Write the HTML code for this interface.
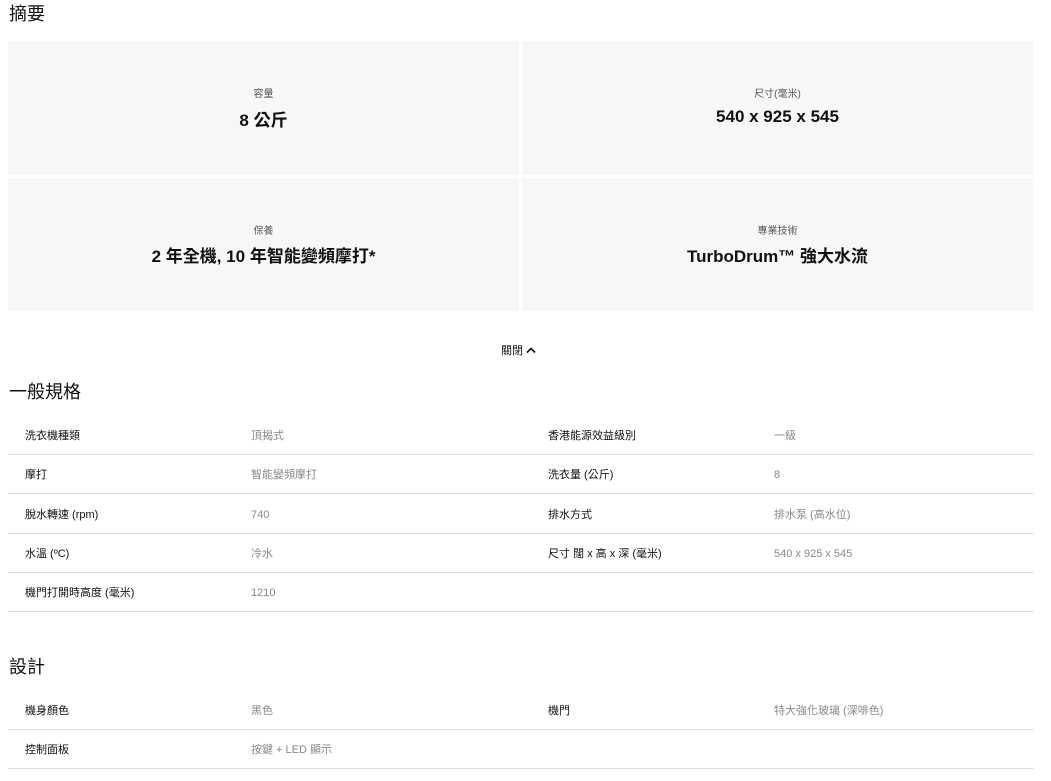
<!DOCTYPE html>
<html><head><meta charset="utf-8"><style>
body{margin:0;background:#fff;font-family:"Liberation Sans","Noto Sans CJK TC",sans-serif;color:#111;width:1051px;height:781px;overflow:hidden;position:relative}
.a{position:absolute}
h2{position:absolute;margin:0;font-size:18px;font-weight:normal;left:9px;line-height:24px}
.card{position:absolute;background:#f7f7f7;text-align:center}
.card .l{position:absolute;left:0;right:0;font-size:10px;color:#555}
.card .v{position:absolute;left:0;right:0;font-size:17px;font-weight:bold;color:#111}
.row{position:absolute;left:8px;width:1026px;height:38px;border-bottom:1px solid #ddd;font-size:11px}
.row span{position:absolute;top:13px;line-height:14px}
.k{color:#111}.g{color:#888}
</style></head><body>
<h2 style="top:2px">摘要</h2>
<div class="card" style="left:8px;top:41px;width:511px;height:134px"><div class="l" style="top:44px">容量</div><div class="v" style="top:65px">8 公斤</div></div>
<div class="card" style="left:522px;top:41px;width:511px;height:134px"><div class="l" style="top:44px">尺寸(毫米)</div><div class="v" style="top:66px">540 x 925 x 545</div></div>
<div class="card" style="left:8px;top:178px;width:511px;height:133px"><div class="l" style="top:44px">保養</div><div class="v" style="top:64px">2 年全機, 10 年智能變頻摩打*</div></div>
<div class="card" style="left:522px;top:178px;width:511px;height:133px"><div class="l" style="top:44px">專業技術</div><div class="v" style="top:64px">TurboDrum™ 強大水流</div></div>
<div class="a" style="left:501px;top:342px;font-size:11px">關閉 <svg width="10" height="8" viewBox="0 0 10 8" style="vertical-align:0"><path d="M1 6.5L5 2.5L9 6.5" stroke="#111" stroke-width="1.6" fill="none"/></svg></div>
<h2 style="top:380px">一般規格</h2>
<div class="row" style="top:416px"><span class="k" style="left:17px">洗衣機種類</span><span class="g" style="left:243px">頂揭式</span><span class="k" style="left:540px">香港能源效益級別</span><span class="g" style="left:766px">一級</span></div>
<div class="row" style="top:455px"><span class="k" style="left:17px">摩打</span><span class="g" style="left:243px">智能變頻摩打</span><span class="k" style="left:540px">洗衣量 (公斤)</span><span class="g" style="left:766px">8</span></div>
<div class="row" style="top:495px"><span class="k" style="left:17px">脫水轉速 (rpm)</span><span class="g" style="left:243px">740</span><span class="k" style="left:540px">排水方式</span><span class="g" style="left:766px">排水泵 (高水位)</span></div>
<div class="row" style="top:534px"><span class="k" style="left:17px">水溫 (ºC)</span><span class="g" style="left:243px">冷水</span><span class="k" style="left:540px">尺寸 闊 x 高 x 深 (毫米)</span><span class="g" style="left:766px">540 x 925 x 545</span></div>
<div class="row" style="top:573px"><span class="k" style="left:17px">機門打開時高度 (毫米)</span><span class="g" style="left:243px">1210</span></div>
<h2 style="top:655px">設計</h2>
<div class="row" style="top:691px"><span class="k" style="left:17px">機身顏色</span><span class="g" style="left:243px">黑色</span><span class="k" style="left:540px">機門</span><span class="g" style="left:766px">特大強化玻璃 (深啡色)</span></div>
<div class="row" style="top:730px"><span class="k" style="left:17px">控制面板</span><span class="g" style="left:243px">按鍵 + LED 顯示</span></div>
</body></html>
